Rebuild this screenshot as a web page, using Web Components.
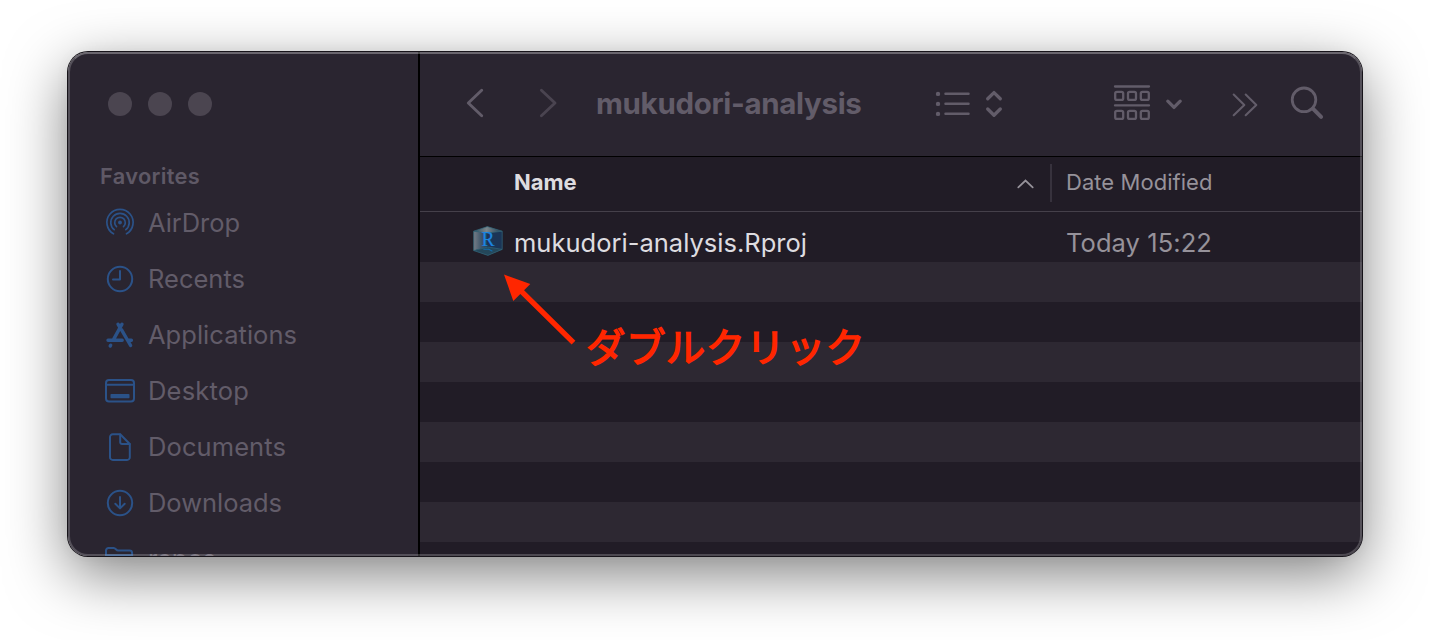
<!DOCTYPE html>
<html lang="ja">
<head>
<meta charset="utf-8">
<title>mukudori-analysis</title>
<style>
html,body{margin:0;height:100%;background:#fff}
body{overflow:hidden;font-family:Inter,"Noto Sans CJK JP",sans-serif}
</style>
</head>
<body>
<finder-window></finder-window>
<script>
const define = (name, html, ready) => customElements.define(name, class extends HTMLElement {
  connectedCallback() {
    if (this.shadowRoot) return;
    this.attachShadow({mode: 'open'}).innerHTML = typeof html === 'function' ? html(this) : html;
    if (ready) ready(this);
  }
});

// A single line of text tracked so that it fills the given width.
define('text-line', `<style>:host{display:block;white-space:pre;flex:none}span{display:inline-block}</style><span></span>`, el => {
  const s = el.shadowRoot.querySelector('span');
  s.textContent = el.getAttribute('text');
  const target = +el.getAttribute('fit');
  if (target) s.style.letterSpacing = ((target - s.getBoundingClientRect().width) / (s.textContent.length)) + 'px';
});

const icons = {
  airdrop: '<circle cx="16" cy="15.5" r="1.9" fill="currentColor" stroke="none"/><g stroke-width="1.7"><path d="M12.5 19.6a5.3 5.3 0 1 1 7 0M10.2 22.7a9.2 9.2 0 1 1 11.6 0M9.5 26.8a13.1 13.1 0 1 1 13 0"/></g>',
  recents: '<circle cx="16" cy="16" r="12.2"/><path d="M16 8v8.5H9"/>',
  apps: '<g stroke-width="3.4"><path d="M18 5.2 9.6 20.3M14 5.2l1.6 2.8M17.6 10.8l9 15.7M4 21.3h14.2M24.3 21.3h3.1M6.7 26.2l-.5.8"/></g>',
  desktop: '<rect x="2" y="5" width="28" height="21.5" rx="3"/><path d="M2 9.7h28"/><rect x="6.5" y="19" width="19" height="4.3" rx=".8" fill="currentColor" stroke="none"/>',
  doc: '<path d="M16.2 3.3H8.7a2.7 2.7 0 0 0-2.7 2.7v20.2a2.7 2.7 0 0 0 2.7 2.7h14.4a2.7 2.7 0 0 0 2.7-2.7V13z"/><path d="M16.2 3.6v7.6a1.8 1.8 0 0 0 1.8 1.8h7.6"/>',
  down: '<circle cx="16" cy="16" r="12.2"/><path d="M16 10v11M11.3 16.8l4.7 4.6 4.7-4.6"/>',
  folder: '<path d="M2 28V7.5A2.5 2.5 0 0 1 4.5 5h5.2c2 0 2.4 2.6 4.4 2.6h11.5A2.5 2.5 0 0 1 28.1 10v16M2 12.2h26"/>'
};
define('side-icon', el => `<style>:host{display:block;flex:none;width:32px;height:32px;color:#2b5288}svg{display:block}</style>
<svg width="32" height="32" viewBox="0 0 32 32" fill="none" stroke="currentColor" stroke-width="2" stroke-linecap="round" stroke-linejoin="round">${icons[el.getAttribute('name')]}</svg>`);

define('side-item', el => `<style>:host{display:flex;flex:none;align-items:center;height:56px;gap:12px;padding-left:36px;color:#625c69;font-size:25.5px}text-line{margin-top:-2px}</style>
<side-icon name="${el.getAttribute('icon')}"></side-icon><text-line text="${el.getAttribute('label')}" fit="${el.getAttribute('fit')}"></text-line>`);

define('traffic-lights', `<style>:host{display:flex;flex:none;gap:16px;padding:40px 0 0 40px}i{width:24px;height:24px;border-radius:50%;background:#4b4550}</style><i></i><i></i><i></i>`);

define('side-bar', `<style>:host{display:flex;flex-direction:column;flex:none;width:350px;background:#2a2530;border-right:2px solid #000;overflow:hidden}
.h{height:26px;margin:47px 0 6px 32px;line-height:26px;font-size:21.8px;font-weight:600;color:#5f5966}</style>
<traffic-lights></traffic-lights>
<text-line class="h" text="Favorites" fit="100"></text-line>
<side-item icon="airdrop" label="AirDrop" fit="92"></side-item>
<side-item icon="recents" label="Recents" fit="97"></side-item>
<side-item icon="apps" label="Applications" fit="149"></side-item>
<side-item icon="desktop" label="Desktop" fit="101"></side-item>
<side-item icon="doc" label="Documents" fit="138"></side-item>
<side-item icon="down" label="Downloads" fit="134"></side-item>
<side-item icon="folder" label="repos" fit="68"></side-item>`);

define('tool-bar', `<style>:host{display:flex;align-items:center;flex:none;height:104px;background:#2a2530;border-bottom:1px solid #000;color:#625c69}
svg{display:block;flex:none;fill:none;stroke:currentColor;stroke-linecap:round;stroke-linejoin:round}
text-line{width:267px;margin:-2px 0 0 34px;font-size:29.5px;font-weight:700}</style>
<svg style="margin-left:44px" width="24" height="104" viewBox="464 52 24 104" stroke-width="2.9"><path d="M481.7 90.2 468.3 103l13.4 12.7"/></svg>
<svg style="margin-left:50px;color:#4a4450" width="24" height="104" viewBox="538 52 24 104" stroke-width="2.9"><path d="M541.4 90.2 555 103l-13.6 12.7"/></svg>
<text-line text="mukudori-analysis" fit="265.5"></text-line>
<svg style="margin-left:67px" width="76" height="104" viewBox="930 52 76 104" stroke-width="2.5"><path d="M945.5 93.8h23M945.5 103.8h23M945.5 113.8h23"/><g fill="currentColor" stroke="none"><circle cx="938" cy="93.9" r="2.2"/><circle cx="938" cy="103.9" r="2.2"/><circle cx="938" cy="113.9" r="2.2"/></g><path stroke-width="3.3" d="M987.7 98.8l6.3-6.2 6.3 6.2M987.7 109l6.3 6.2 6.3-6.2"/></svg>
<svg style="margin-left:104px" width="76" height="104" viewBox="1110 52 76 104" stroke-width="2.3"><path d="M1115 86.5h34M1115 105.4h34"/><g><rect x="1115.2" y="91.9" width="8" height="8" rx="1.7"/><rect x="1128" y="91.9" width="8" height="8" rx="1.7"/><rect x="1140.8" y="91.9" width="8" height="8" rx="1.7"/><rect x="1115.2" y="110.9" width="8" height="8" rx="1.7"/><rect x="1128" y="110.9" width="8" height="8" rx="1.7"/><rect x="1140.8" y="110.9" width="8" height="8" rx="1.7"/></g><path stroke-width="3.3" d="M1167.8 101.2l6.2 6.2 6.2-6.2"/></svg>
<svg style="margin-left:42px" width="32" height="104" viewBox="1228 52 32 104" stroke-width="2.1"><path d="M1233.7 94.6l10.6 10.3-10.6 10.3M1245.7 94.6l10.6 10.3-10.6 10.3"/></svg>
<svg style="margin-left:26px" width="42" height="104" viewBox="1286 52 42 104" stroke-width="2.8"><circle cx="1304" cy="99.8" r="11.8"/><path stroke-width="4" d="M1312.9 108.7l8.2 8.2"/></svg>`);

define('rproj-icon', `<style>:host{display:block;flex:none;width:32px;height:32px}svg{display:block}</style>
<svg width="32" height="32" viewBox="0 0 32 32"><defs><linearGradient id="l"><stop offset="0" stop-color="#777d86"/><stop offset=".55" stop-color="#3f566b"/><stop offset="1" stop-color="#1f405e"/></linearGradient><linearGradient id="t" x2="1"><stop offset="0" stop-color="#2d4c5f"/><stop offset=".45" stop-color="#7b868b"/><stop offset="1" stop-color="#1d3d54"/></linearGradient></defs>
<g transform="translate(.4 -1)"><path d="M1.3 6.2 15 1.6l14.8 4.6v18.2L15.5 30.4 1.3 25.6z" fill="#17304a"/>
<path d="M1.3 6.2 15 8v14L1.3 25.6z" fill="url(#l)"/><path d="M15 8l14.8-1.8v18.2L15 22z" fill="#1b3556"/>
<path d="M1.3 6.2 15 1.6l14.8 4.6L15 8z" fill="url(#t)"/><path d="M1.3 25.6 15.5 22l14.3 2.4-14.3 6z" fill="#24475a"/>
<path d="M1.3 6.2 15 1.6l14.8 4.6v18.2L15.5 30.4 1.3 25.6zM29.8 6.2 15 8 1.3 6.2M1.3 25.6 15.5 22l14.3 2.4" fill="none" stroke="#35697b" stroke-width=".7"/>
<path d="M11 24.2h5M16 24l4 2.2" stroke="#146aa8" stroke-width="1.1"/>
<text x="9.2" y="21" font-family="Liberation Serif,serif" font-size="21" fill="#1b86e0" stroke="#1b86e0" stroke-width=".2" textLength="13" lengthAdjust="spacingAndGlyphs">R</text></g></svg>`);

define('file-list', `<style>:host{display:flex;flex-direction:column;flex:1;min-height:0;background:#211c26;overflow:hidden}
.head{display:flex;align-items:center;flex:none;height:52px;padding-bottom:2px;border-bottom:1px solid #45404a}
.head text-line{font-size:22px;margin-top:-2px}
.head .name{flex:0 0 502px;box-sizing:border-box;padding-left:94px;font-weight:700;color:#dedce0}
svg{flex:none;display:block;margin-left:94px}
.sep{width:2px;height:38px;background:#37323d;margin-left:16px}
.head .date{color:#96929a;margin-left:14px}
.rows{flex:1;margin-top:10px;background:repeating-linear-gradient(#211c26 0 40px,#2d2832 40px 80px)}
.row{display:flex;align-items:center;height:40px;padding-left:52px;font-size:25.5px;color:#dedce0}
.row rproj-icon{margin-right:10px}
.row .d{color:#96929a}
.f{width:552px;flex:none}</style>
<div class="head"><text-line class="name" text="Name" fit="62.5"></text-line>
<svg width="18" height="12" viewBox="0 0 18 12" fill="none" stroke="#96929a" stroke-width="1.8" stroke-linecap="round"><path d="M2.3 10.3 9.5 3.6 16.7 10.3"/></svg>
<div class="sep"></div><text-line class="date" text="Date Modified" fit="146.5"></text-line></div>
<div class="rows"><div class="row"><rproj-icon></rproj-icon><text-line class="f" text="mukudori-analysis.Rproj" fit="293"></text-line><text-line class="d" text="Today 15:22" fit="146"></text-line></div></div>`);

// Red call-out laid over the file list.
define('click-note', `<style>:host{position:absolute;left:500px;top:268px;display:block;color:#ff2600}
svg{display:block}
text-line{position:absolute;left:86px;top:49px;font:400 39.5px/56px "Noto Sans CJK JP",sans-serif;-webkit-text-stroke:1.5px #ff2600}</style>
<svg width="380" height="112" viewBox="500 268 380 112" fill="#ff2600"><path d="M504 274.5l26.3 9.5-6.2 6.2 51.3 50.6-3.8 3.8-51.3-50.6-7 7z"/></svg>
<text-line text="ダブルクリック" fit="279.5"></text-line>`);

define('finder-window', `<style>:host{display:block;position:relative;width:1430px;height:640px;padding:52px 68px 84px;box-sizing:border-box}
.w{position:relative;display:flex;height:504px;border-radius:20px;overflow:hidden}
.shadow{border-radius:20px;box-shadow:0 0 0 1px #17141a,0 18px 60px rgba(0,0,0,.5),0 0 16px rgba(0,0,0,.04)}
.w::after{content:"";position:absolute;inset:0;border-radius:20px;border:2px solid rgba(255,255,255,.2);border-top-color:rgba(255,255,255,.3);pointer-events:none}
.main{display:flex;flex-direction:column;flex:1;min-width:0}</style>
<div class="shadow"><div class="w"><side-bar></side-bar><div class="main"><tool-bar></tool-bar><file-list></file-list></div></div></div>
<click-note></click-note>`);
</script>
</body>
</html>
